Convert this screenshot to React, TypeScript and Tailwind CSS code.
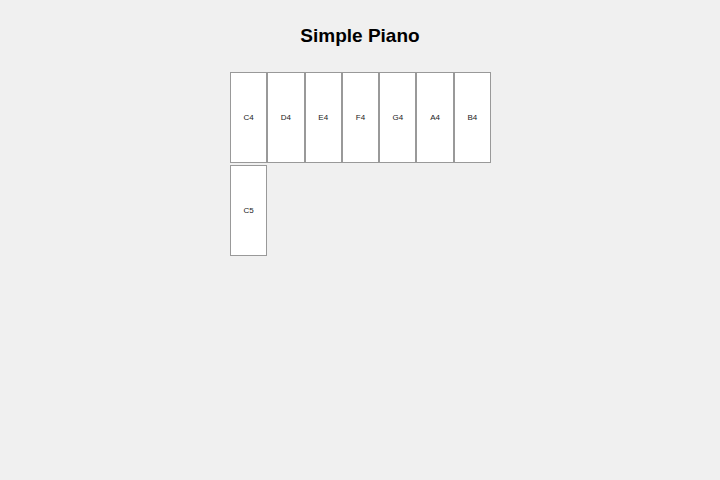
import React from 'react';

const notes = ['C4', 'D4', 'E4', 'F4', 'G4', 'A4', 'B4', 'C5'];

export default function App() {
  return (
    <div className="min-h-[480px] w-full bg-[#f0f0f0] flex flex-col items-center font-['Liberation_Sans',Arial,sans-serif]">
      <h1 className="mt-[24px] text-[19px] leading-[24px] font-bold text-black">Simple Piano</h1>
      <div className="mt-[24px] ml-[2px] w-[262px] flex flex-wrap gap-y-[2px]">
        {notes.map((n) => (
          <div
            key={n}
            className="w-[37.3px] h-[91px] bg-white border border-[#999] flex items-center justify-center text-[8px] text-[#222]"
          >
            {n}
          </div>
        ))}
      </div>
    </div>
  );
}
